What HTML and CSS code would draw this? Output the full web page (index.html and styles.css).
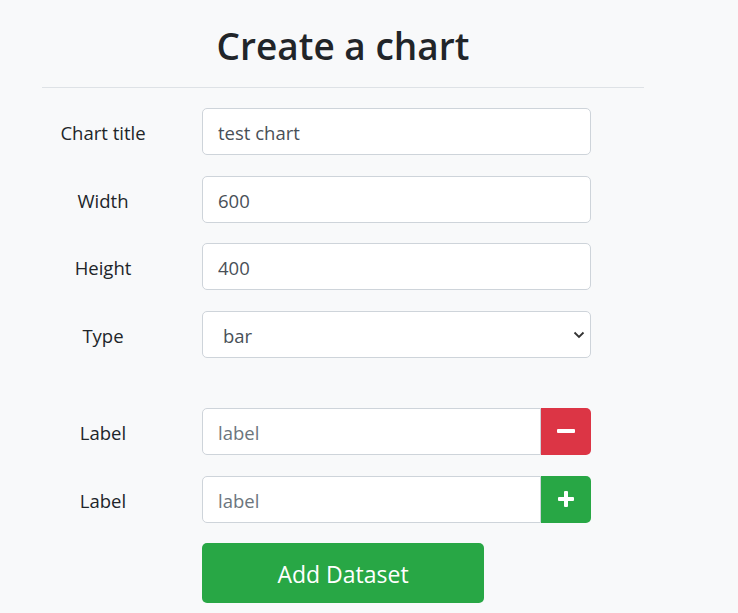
FILE: index.html
```html
<!DOCTYPE html>
<html>
<head>
<meta charset="utf-8">
<link rel="stylesheet" href="styles.css">
</head>
<body>
<div class="page">
  <h1 class="title">Create a chart</h1>
  <hr class="rule">
  <form class="form">
    <div class="row">
      <label class="lbl">Chart title</label>
      <input class="field" type="text" value="test chart">
    </div>
    <div class="row">
      <label class="lbl">Width</label>
      <input class="field" type="text" value="600">
    </div>
    <div class="row">
      <label class="lbl">Height</label>
      <input class="field" type="text" value="400">
    </div>
    <div class="row">
      <label class="lbl">Type</label>
      <div class="select-wrap">
        <select class="field select"><option>bar</option></select>
        <svg class="chev" width="12" height="8" viewBox="0 0 12 8"><path d="M1.5 1.5 L6 6 L10.5 1.5" fill="none" stroke="#333" stroke-width="1.8"/></svg>
      </div>
    </div>
    <div class="row row-gap row-ds">
      <label class="lbl">Label</label>
      <div class="group">
        <input class="field grp-field" type="text" placeholder="label">
        <button type="button" class="btn-icon btn-red"><svg width="18" height="18" viewBox="0 0 18 18"><rect x="0" y="7" width="18" height="4" rx="1" fill="#fff"/></svg></button>
      </div>
    </div>
    <div class="row row-ds">
      <label class="lbl">Label</label>
      <div class="group">
        <input class="field grp-field" type="text" placeholder="label">
        <button type="button" class="btn-icon btn-green"><svg width="16" height="16" viewBox="0 0 16 16"><rect x="0" y="6" width="16" height="4" rx="1" fill="#fff"/><rect x="6" y="0" width="4" height="16" rx="1" fill="#fff"/></svg></button>
      </div>
    </div>
    <div class="row">
      <span class="lbl"></span>
      <button type="button" class="btn-add">Add Dataset</button>
    </div>
  </form>
</div>
</body>
</html>
```
FILE: styles.css
```css
html, body {
  margin: 0;
  padding: 0;
  background: #f8f9fa;
}
body {
  font-family: "Open Sans", "Noto Sans", sans-serif;
  color: #212529;
}
.page {
  width: 602px;
  margin-left: 42px;
}
.title {
  margin: 0;
  padding-top: 22px;
  text-align: center;
  font-size: 37px;
  font-weight: 600;
  line-height: 48px;
  color: #212529;
}
.rule {
  margin: 17px 0 0;
  border: 0;
  border-top: 1px solid #dee2e6;
}
.form {
  padding-top: 20px;
}
.row {
  display: flex;
  align-items: center;
  margin-bottom: 20.5px;
}
.row-ds {
  margin-bottom: 21px;
}
.row-gap {
  margin-top: 50px;
}
.lbl {
  width: 122px;
  flex: none;
  text-align: center;
  font-size: 18.5px;
  margin-right: 38px;
  padding-top: 2px;
}
.field {
  box-sizing: border-box;
  width: 389px;
  height: 47px;
  padding: 2px 15px 0;
  border: 1px solid #ced4da;
  border-radius: 5px;
  background: #fff;
  font-family: inherit;
  font-size: 18.5px;
  color: #495057;
  outline: none;
}
.field::placeholder {
  color: #6c757d;
}
.select-wrap {
  position: relative;
  width: 389px;
}
.select {
  appearance: none;
  -webkit-appearance: none;
  padding-left: 20px;
}
.chev {
  position: absolute;
  right: 6px;
  top: 20px;
  pointer-events: none;
}
.group {
  display: flex;
  width: 389px;
}
.grp-field {
  width: 339px;
  border-radius: 5px 0 0 5px;
}
.btn-icon {
  width: 50px;
  height: 47px;
  border: 0;
  border-radius: 0 5px 5px 0;
  display: flex;
  align-items: center;
  justify-content: center;
  padding: 0;
}
.btn-red { background: #dc3545; }
.btn-green { background: #28a745; }
.btn-add {
  width: 282px;
  height: 60px;
  border: 0;
  border-radius: 5px;
  background: #28a745;
  color: #fff;
  font-family: inherit;
  font-size: 23px;
  margin-top: -1px;
  padding-top: 3px;
}
```
